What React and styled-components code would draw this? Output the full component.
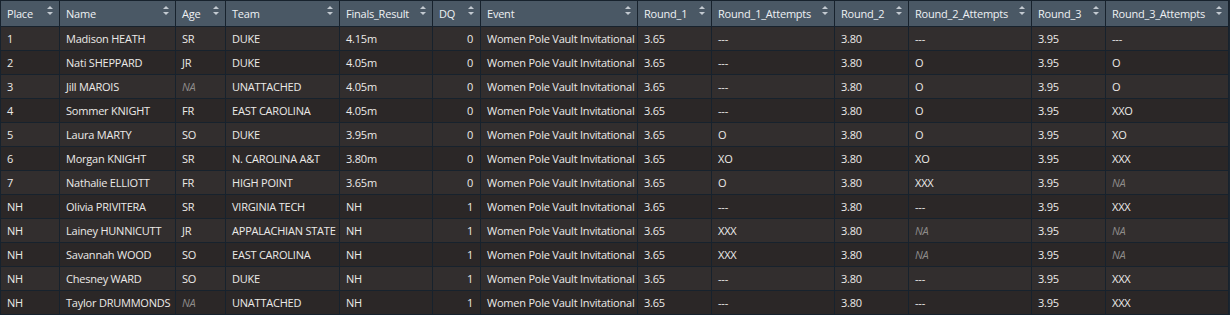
import React from 'react';
import styled, { createGlobalStyle } from 'styled-components';

const Global = createGlobalStyle`
  html, body {
    margin: 0;
    padding: 0;
    background: #1b2631;
  }
`;

const Wrapper = styled.div`
  width: 1230px;
  height: 315px;
  overflow: hidden;
  background: #1b2631;
  font-family: "Open Sans", "Noto Sans", sans-serif;
  font-size: 11px;
  letter-spacing: -0.22px;
`;

const Table = styled.table`
  border-collapse: collapse;
  table-layout: fixed;
  width: 1228px;
`;

const HeadCell = styled.th`
  position: relative;
  height: 25px;
  padding: 0 14px 0 6px;
  background: #4a5865;
  color: #eef1f4;
  font-weight: normal;
  text-align: left;
  border: 1px solid #17222d;
  white-space: nowrap;
  overflow: hidden;
`;

const SortIcon = styled.svg`
  position: absolute;
  top: 5px;
  right: 6px;
  width: 6px;
  height: 9px;
`;

const Row = styled.tr`
  background: ${p => (p.odd ? '#322e2e' : '#2b2727')};
`;

const Cell = styled.td`
  height: 23px;
  padding: 0 ${p => (p.right ? '7px' : '6px')};
  color: #eceae8;
  text-align: ${p => (p.right ? 'right' : 'left')};
  border: 1px solid #17222d;
  white-space: nowrap;
  overflow: hidden;
`;

const Missing = styled.span`
  color: #8e8c8a;
  font-style: italic;
`;

const columns = [
  { key: 'place', label: 'Place', width: 59 },
  { key: 'name', label: 'Name', width: 116 },
  { key: 'age', label: 'Age', width: 50 },
  { key: 'team', label: 'Team', width: 114 },
  { key: 'result', label: 'Finals_Result', width: 93 },
  { key: 'dq', label: 'DQ', width: 48, right: true },
  { key: 'event', label: 'Event', width: 157 },
  { key: 'r1', label: 'Round_1', width: 74 },
  { key: 'r1a', label: 'Round_1_Attempts', width: 123 },
  { key: 'r2', label: 'Round_2', width: 74 },
  { key: 'r2a', label: 'Round_2_Attempts', width: 123 },
  { key: 'r3', label: 'Round_3', width: 74 },
  { key: 'r3a', label: 'Round_3_Attempts', width: 123 },
];

const EV = 'Women Pole Vault Invitational';
const NA = null;

// place, name, age, team, result, dq, r1a, r2a, r3a
const raw = [
  ['1', 'Madison HEATH', 'SR', 'DUKE', '4.15m', 0, '---', '---', '---'],
  ['2', 'Nati SHEPPARD', 'JR', 'DUKE', '4.05m', 0, '---', 'O', 'O'],
  ['3', 'Jill MAROIS', NA, 'UNATTACHED', '4.05m', 0, '---', 'O', 'O'],
  ['4', 'Sommer KNIGHT', 'FR', 'EAST CAROLINA', '4.05m', 0, '---', 'O', 'XXO'],
  ['5', 'Laura MARTY', 'SO', 'DUKE', '3.95m', 0, 'O', 'O', 'XO'],
  ['6', 'Morgan KNIGHT', 'SR', 'N. CAROLINA A&T', '3.80m', 0, 'XO', 'XO', 'XXX'],
  ['7', 'Nathalie ELLIOTT', 'FR', 'HIGH POINT', '3.65m', 0, 'O', 'XXX', NA],
  ['NH', 'Olivia PRIVITERA', 'SR', 'VIRGINIA TECH', 'NH', 1, '---', '---', 'XXX'],
  ['NH', 'Lainey HUNNICUTT', 'JR', 'APPALACHIAN STATE', 'NH', 1, 'XXX', NA, NA],
  ['NH', 'Savannah WOOD', 'SO', 'EAST CAROLINA', 'NH', 1, 'XXX', NA, NA],
  ['NH', 'Chesney WARD', 'SO', 'DUKE', 'NH', 1, '---', '---', 'XXX'],
  ['NH', 'Taylor DRUMMONDS', NA, 'UNATTACHED', 'NH', 1, '---', '---', 'XXX'],
];

const rows = raw.map(([place, name, age, team, result, dq, r1a, r2a, r3a]) => ({
  place, name, age, team, result, dq, event: EV,
  r1: '3.65', r1a, r2: '3.80', r2a, r3: '3.95', r3a,
}));

function Sort() {
  return (
    <SortIcon viewBox="0 0 6 9">
      <path d="M3 0 L6 3 L0 3 Z" fill="#c3cad1" />
      <path d="M3 9 L6 6 L0 6 Z" fill="#c3cad1" />
    </SortIcon>
  );
}

export default function App() {
  return (
    <Wrapper>
      <Global />
      <Table>
        <colgroup>
          {columns.map(c => <col key={c.key} style={{ width: c.width }} />)}
        </colgroup>
        <thead>
          <tr>
            {columns.map(c => (
              <HeadCell key={c.key}>
                {c.label}
                <Sort />
              </HeadCell>
            ))}
          </tr>
        </thead>
        <tbody>
          {rows.map((r, i) => (
            <Row key={i} odd={i % 2 === 0}>
              {columns.map(c => (
                <Cell key={c.key} right={c.right}>
                  {r[c.key] === null ? <Missing>NA</Missing> : r[c.key]}
                </Cell>
              ))}
            </Row>
          ))}
        </tbody>
      </Table>
    </Wrapper>
  );
}
